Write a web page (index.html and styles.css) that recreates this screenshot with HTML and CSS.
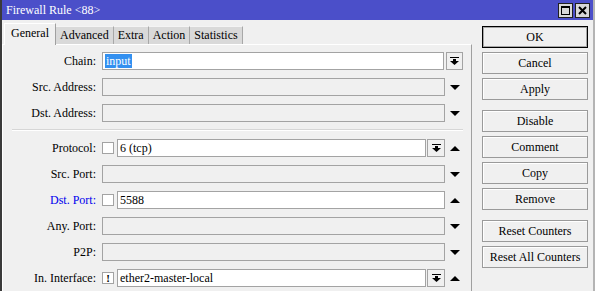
FILE: index.html
```html
<!DOCTYPE html>
<html lang="en">
<head>
    <meta charset="UTF-8">
    <title>Firewall Rule &lt;88&gt;</title>
    <link rel="stylesheet" href="styles.css">
</head>
<body>

<div class="window">
    <div class="titlebar">
        <span class="title">Firewall Rule &lt;88&gt;</span>
        <div class="title-buttons">
            <span class="tbtn"><span class="max-glyph"></span></span>
            <span class="tbtn">
                <svg width="9" height="9" viewBox="0 0 9 9"><path d="M1 1 L8 8 M8 1 L1 8" stroke="#000" stroke-width="2"/></svg>
            </span>
        </div>
    </div>

    <div class="content">
        <div class="main">
            <div class="tabs">
                <span class="tab active">General</span>
                <span class="tab">Advanced</span>
                <span class="tab">Extra</span>
                <span class="tab">Action</span>
                <span class="tab">Statistics</span>
            </div>

            <div class="panel">
                <!-- Chain -->
                <div class="row">
                    <label class="label">Chain:</label>
                    <div class="field white"><span class="selected">input</span></div>
                    <span class="dd chain-dd">
                        <svg width="9" height="8" viewBox="0 0 9 8"><rect x="0" y="0" width="9" height="1"/><rect x="3" y="2" width="3" height="2"/><polygon points="0,4 9,4 4.5,8"/></svg>
                    </span>
                </div>

                <div class="row">
                    <label class="label">Src. Address:</label>
                    <div class="field"></div>
                    <span class="arrow"><span class="tri-down"></span></span>
                </div>

                <div class="row">
                    <label class="label">Dst. Address:</label>
                    <div class="field"></div>
                    <span class="arrow"><span class="tri-down"></span></span>
                </div>

                <div class="separator"></div>

                <!-- Protocol -->
                <div class="row">
                    <label class="label">Protocol:</label>
                    <span class="check"></span>
                    <div class="field white">6 (tcp)</div>
                    <span class="dd">
                        <svg width="9" height="8" viewBox="0 0 9 8"><rect x="0" y="0" width="9" height="1"/><rect x="3" y="2" width="3" height="2"/><polygon points="0,4 9,4 4.5,8"/></svg>
                    </span>
                    <span class="arrow"><span class="tri-up"></span></span>
                </div>

                <div class="row">
                    <label class="label">Src. Port:</label>
                    <div class="field"></div>
                    <span class="arrow"><span class="tri-down"></span></span>
                </div>

                <div class="row">
                    <label class="label blue">Dst. Port:</label>
                    <span class="check"></span>
                    <div class="field white">5588</div>
                    <span class="arrow"><span class="tri-up"></span></span>
                </div>

                <div class="row">
                    <label class="label">Any. Port:</label>
                    <div class="field"></div>
                    <span class="arrow"><span class="tri-down"></span></span>
                </div>

                <div class="row">
                    <label class="label">P2P:</label>
                    <div class="field"></div>
                    <span class="arrow"><span class="tri-down"></span></span>
                </div>

                <!-- In. Interface -->
                <div class="row">
                    <label class="label">In. Interface:</label>
                    <span class="check bang">!</span>
                    <div class="field white">ether2-master-local</div>
                    <span class="dd">
                        <svg width="9" height="8" viewBox="0 0 9 8"><rect x="0" y="0" width="9" height="1"/><rect x="3" y="2" width="3" height="2"/><polygon points="0,4 9,4 4.5,8"/></svg>
                    </span>
                    <span class="arrow"><span class="tri-up"></span></span>
                </div>
            </div>
        </div>

        <div class="buttons">
            <button class="btn default">OK</button>
            <button class="btn">Cancel</button>
            <button class="btn">Apply</button>
            <div class="btn-gap"></div>
            <button class="btn">Disable</button>
            <button class="btn">Comment</button>
            <button class="btn">Copy</button>
            <button class="btn">Remove</button>
            <div class="btn-gap"></div>
            <button class="btn">Reset Counters</button>
            <button class="btn">Reset All Counters</button>
        </div>
    </div>
</div>

</body>
</html>
```

FILE: styles.css
```css
body {
    margin: 0;
    font-family: 'Liberation Serif', serif;
    font-size: 12px;
    color: #000;
    background-color: #f0f0f0;
}

.window {
    width: 595px;
    height: 291px;
    box-sizing: border-box;
    border-left: 2px solid #3a3a3a;
    border-right: 2px solid #b4b4b4;
    background-color: #f0f0f0;
    overflow: hidden;
}

.titlebar {
    height: 20px;
    margin-left: -2px;
    margin-right: -2px;
    background-color: #4b4fc9;
    display: flex;
    align-items: center;
    justify-content: space-between;
}

.title {
    color: white;
    padding-left: 6px;
    font-size: 12px;
}

.title-buttons {
    display: flex;
    gap: 2px;
    padding-right: 5px;
}

.tbtn {
    width: 13px;
    height: 13px;
    background-color: #d8d8d8;
    border: 1px solid #202020;
    display: flex;
    align-items: center;
    justify-content: center;
}

.max-glyph {
    width: 7px;
    height: 6px;
    border: 1px solid #000;
    border-top-width: 2px;
}

.content {
    display: flex;
}

.main {
    width: 470px;
}

.tabs {
    display: flex;
    align-items: flex-end;
    height: 24px;
    padding-left: 2px;
}

.tab {
    height: 18px;
    line-height: 17px;
    padding: 0 4px;
    box-sizing: border-box;
    background-color: #d9d9d9;
    border-right: 1px solid #a8a8a8;
    border-top: 1px solid #f4f4f4;
}

.tab.active {
    height: 22px;
    line-height: 18px;
    padding: 0 6px;
    background-color: #f0f0f0;
    border-left: 1px solid #fff;
    border-top: 1px solid #fff;
    border-right: 1px solid #a0a0a0;
    margin-bottom: -1px;
    position: relative;
}

.panel {
    border-top: 1px solid #fff;
    border-left: 1px solid #fff;
    border-right: 1px solid #a0a0a0;
    height: 260px;
    padding: 7px 8px 0 0;
}

.row {
    display: flex;
    align-items: center;
    height: 18px;
    margin-bottom: 8px;
}

.label {
    width: 93px;
    margin-right: 6px;
    text-align: right;
}

.label.blue {
    color: #0000ee;
}

.field {
    flex: 1;
    height: 18px;
    box-sizing: border-box;
    border: 1px solid #a3a3a3;
    background-color: #f0f0f0;
    padding-left: 2px;
    line-height: 16px;
    white-space: nowrap;
}

.field.white {
    background-color: #fff;
}

.selected {
    background-color: #3390f0;
    color: white;
    padding: 0 1px;
}

.check {
    width: 12px;
    height: 12px;
    border: 1px solid #a3a3a3;
    background-color: #fff;
    margin-right: 3px;
    box-sizing: border-box;
    font-weight: bold;
    font-size: 11px;
    line-height: 10px;
    text-align: center;
}

.dd {
    width: 18px;
    height: 18px;
    box-sizing: border-box;
    border: 1px solid #a3a3a3;
    background-color: #f0f0f0;
    margin-left: 1px;
    display: flex;
    align-items: center;
    justify-content: center;
}

.chain-dd {
    width: 17px;
    margin-left: 2px;
}

.arrow {
    width: 18px;
    display: flex;
    justify-content: center;
    padding-left: 1px;
    box-sizing: border-box;
}

.tri-down {
    width: 0;
    height: 0;
    border-left: 5px solid transparent;
    border-right: 5px solid transparent;
    border-top: 5px solid #000;
}

.tri-up {
    width: 0;
    height: 0;
    border-left: 5px solid transparent;
    border-right: 5px solid transparent;
    border-bottom: 5px solid #000;
}

.separator {
    height: 1px;
    margin: 0 0 8px 9px;
    background-color: #d6d6d6;
    border-bottom: 1px solid #fff;
    margin-top: -1px;
}

.buttons {
    display: flex;
    flex-direction: column;
    gap: 4px;
    margin-left: 10px;
    padding-top: 6px;
    width: 106px;
}

.btn {
    height: 22px;
    font-family: 'Liberation Serif', serif;
    font-size: 12px;
    background-color: #f0f0f0;
    border: 1px solid #9a9a9a;
    box-shadow: inset 1px 1px 0 #fff;
    padding: 0;
    color: #000;
}

.btn.default {
    border: 1px solid #000;
    box-shadow: inset 0 0 0 1px #a8a8a8;
}

.btn-gap {
    height: 2px;
}
```
